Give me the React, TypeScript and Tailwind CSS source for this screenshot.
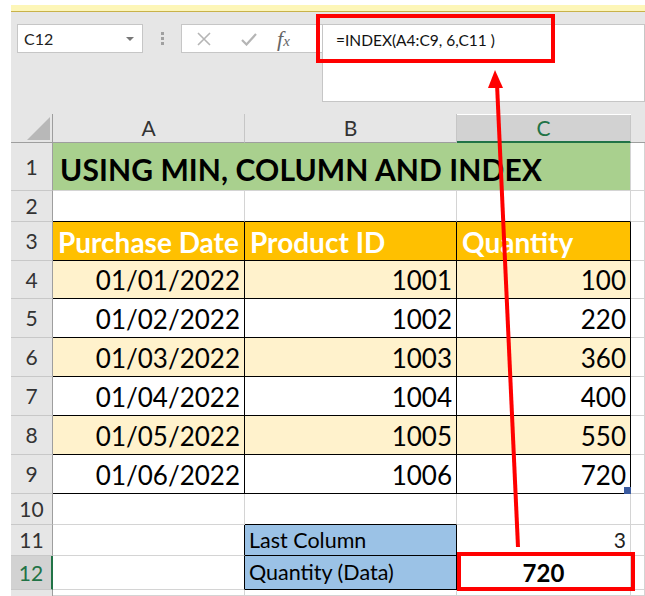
import React from 'react';

const rows = [
  { n: 4, date: '01/01/2022', id: '1001', qty: '100' },
  { n: 5, date: '01/02/2022', id: '1002', qty: '220' },
  { n: 6, date: '01/03/2022', id: '1003', qty: '360' },
  { n: 7, date: '01/04/2022', id: '1004', qty: '400' },
  { n: 8, date: '01/05/2022', id: '1005', qty: '550' },
  { n: 9, date: '01/06/2022', id: '1006', qty: '720' },
];

const font = { fontFamily: 'Lato, "Noto Sans", sans-serif' };

const RowHead = ({ n, active }: { n: number | string; active?: boolean }) => (
  <div
    className={`flex items-center justify-center border-b border-[#c8c8c8] text-[21px] ${
      active ? 'bg-[#d2d2d2] text-[#217346] border-r-2 border-r-[#217346]' : 'bg-[#e6e6e6] text-[#333] border-r border-r-[#9e9e9e]'
    }`}
  >
    {n}
  </div>
);

const Blank = ({ cls = '' }: { cls?: string }) => (
  <div className={`bg-white border-r border-b border-[#d4d4d4] ${cls}`} />
);

export default function App() {
  return (
    <div className="relative w-[645px] h-[596px] overflow-hidden bg-white pt-[5px] pl-[11px]" style={font}>
      {/* yellow strip */}
      <div className="h-[7px] bg-[#fdf6b8] border-b border-[#c8b24a]" />

      {/* formula bar area */}
      <div className="h-[102px] bg-[#e6e6e6] flex items-start pt-[12px] pl-[6px]">
        <div className="w-[126px] h-[29px] bg-white border border-[#c6c6c6] flex items-center justify-between pl-[6px] pr-[8px]">
          <span className="text-[16px] text-[#222]">C12</span>
          <span className="w-0 h-0 border-l-[4px] border-r-[4px] border-t-[4px] border-l-transparent border-r-transparent border-t-[#777]" />
        </div>
        <div className="w-[38px] h-[29px] flex flex-col items-center justify-center gap-[2px]">
          <span className="w-[3px] h-[3px] bg-[#a0a0a0]" />
          <span className="w-[3px] h-[3px] bg-[#a0a0a0]" />
          <span className="w-[3px] h-[3px] bg-[#a0a0a0]" />
        </div>
        <div className="w-[141px] h-[29px] bg-white border border-r-0 border-[#c6c6c6] flex items-center">
          <svg width="14" height="14" viewBox="0 0 14 14" className="ml-[15px]">
            <path d="M1 1 L13 13 M13 1 L1 13" stroke="#b5b5b5" strokeWidth="1.6" />
          </svg>
          <svg width="16" height="14" viewBox="0 0 16 14" className="ml-[30px]">
            <path d="M1 8 L5.5 12.5 L15 2" stroke="#b5b5b5" strokeWidth="2.2" fill="none" />
          </svg>
          <span
            className="ml-[20px] text-[22px] italic text-[#666] leading-none"
            style={{ fontFamily: '"Liberation Serif", serif' }}
          >
            f<span className="text-[15px]">x</span>
          </span>
        </div>
        <div className="flex-1 h-[78px] bg-white border border-[#c6c6c6] pl-[13px] pt-[3px]">
          <span className="text-[15.5px] text-[#111]">=INDEX(A4:C9, 6,C11 )</span>
        </div>
      </div>

      {/* grid */}
      <div
        className="grid"
        style={{
          gridTemplateColumns: '42px 192px 212px 174px 14px',
          gridTemplateRows: '29px 48px 31px 39px 38px 39px 39px 39px 39px 39px 31px 31px 34px 6px',
        }}
      >
        {/* header row */}
        <div className="bg-[#e6e6e6] border-r border-b border-[#9e9e9e] relative">
          <div
            className="absolute left-[16px] top-[3px] w-[23px] h-[23px] bg-[#b8b8b8]"
            style={{ clipPath: 'polygon(100% 0, 100% 100%, 0 100%)' }}
          />
        </div>
        <div className="bg-[#e6e6e6] border-r border-b border-[#c6c6c6] border-b-[#9e9e9e] flex items-center justify-center text-[21px] text-[#333]">A</div>
        <div className="bg-[#e6e6e6] border-r border-b border-[#c6c6c6] border-b-[#9e9e9e] flex items-center justify-center text-[21px] text-[#333]">B</div>
        <div className="bg-[#d2d2d2] border-r border-[#c6c6c6] border-b-2 border-b-[#217346] mt-[1px] flex items-center justify-center text-[21px] text-[#217346]">C</div>
        <div className="bg-[#e6e6e6] border-b border-[#9e9e9e]" />

        {/* row 1 */}
        <RowHead n={1} />
        <div className="col-span-3 bg-[#a9d08e] border-r border-b border-[#d4d4d4] flex items-center pl-[7px] pt-[6px]">
          <span className="text-[30px] font-bold text-black tracking-[0.1px]">USING MIN, COLUMN AND INDEX</span>
        </div>
        <Blank />

        {/* row 2 */}
        <RowHead n={2} />
        <div className="bg-white border-r border-[#d4d4d4] border-b border-b-black" />
        <div className="bg-white border-r border-[#d4d4d4] border-b border-b-black" />
        <div className="bg-white border-r border-[#d4d4d4] border-b border-b-black" />
        <Blank />

        {/* row 3 */}
        <RowHead n={3} />
        {['Purchase Date', 'Product ID', 'Quantity'].map((h) => (
          <div key={h} className="bg-[#ffc000] border-r border-b border-black flex items-center pl-[5px] pt-[2px]">
            <span className="text-[28px] font-bold text-white">{h}</span>
          </div>
        ))}
        <Blank />

        {rows.map((r, i) => {
          const bg = i % 2 === 0 ? 'bg-[#fff2cc]' : 'bg-white';
          return (
            <React.Fragment key={r.n}>
              <RowHead n={r.n} />
              <div className={`${bg} border-r border-b border-black flex items-center justify-end pr-[4px] pt-[2px] text-[26px] text-black`}>{r.date}</div>
              <div className={`${bg} border-r border-b border-black flex items-center justify-end pr-[4px] pt-[2px] text-[26px] text-black`}>{r.id}</div>
              <div className={`${bg} border-r border-b border-black flex items-center justify-end pr-[4px] pt-[2px] text-[26px] text-black relative`}>
                {r.qty}
                {r.n === 9 && <span className="absolute right-[-1px] bottom-[-1px] w-[7px] h-[7px] bg-[#3a5ba0]" />}
              </div>
              <Blank />
            </React.Fragment>
          );
        })}

        {/* row 10 */}
        <RowHead n={10} />
        <Blank />
        <div className="bg-white border-r border-[#d4d4d4] border-b border-b-black" />
        <Blank />
        <Blank />

        {/* row 11 */}
        <RowHead n={11} />
        <div className="bg-white border-r border-r-black border-b border-[#d4d4d4]" />
        <div className="bg-[#9bc2e6] border-r border-b border-black flex items-center pl-[4px] text-[21.5px] text-black">Last Column</div>
        <div className="bg-white border-r border-b border-[#d4d4d4] flex items-center justify-end pr-[4px] text-[21px] text-[#222]">3</div>
        <Blank />

        {/* row 12 */}
        <RowHead n={12} active />
        <div className="bg-white border-r border-r-black border-b border-[#d4d4d4]" />
        <div className="bg-[#9bc2e6] border-r border-b border-black flex items-center pl-[4px] text-[21.5px] text-black">Quantity (Data)</div>
        <div className="bg-white border-r border-b border-[#d4d4d4] flex items-center justify-center text-[24px] font-bold text-black">720</div>
        <Blank />

        {/* row 13 */}
        <div className="bg-[#e6e6e6] border-r border-[#9e9e9e]" />
        <Blank />
        <Blank />
        <Blank />
        <Blank />
      </div>

      {/* red annotation boxes */}
      <div className="absolute left-[316px] top-[14px] w-[239px] h-[49px] border-[4px] border-[#ff0000]" />
      <div className="absolute left-[457px] top-[552px] w-[178px] h-[39px] border-[4px] border-[#ff0000]" />

      {/* arrow */}
      <svg className="absolute left-0 top-0 pointer-events-none" width="645" height="596">
        <line x1="518" y1="547" x2="497" y2="84" stroke="#ff0000" strokeWidth="4" />
        <polygon points="495,70 488,88 503,88" fill="#ff0000" />
      </svg>
    </div>
  );
}
